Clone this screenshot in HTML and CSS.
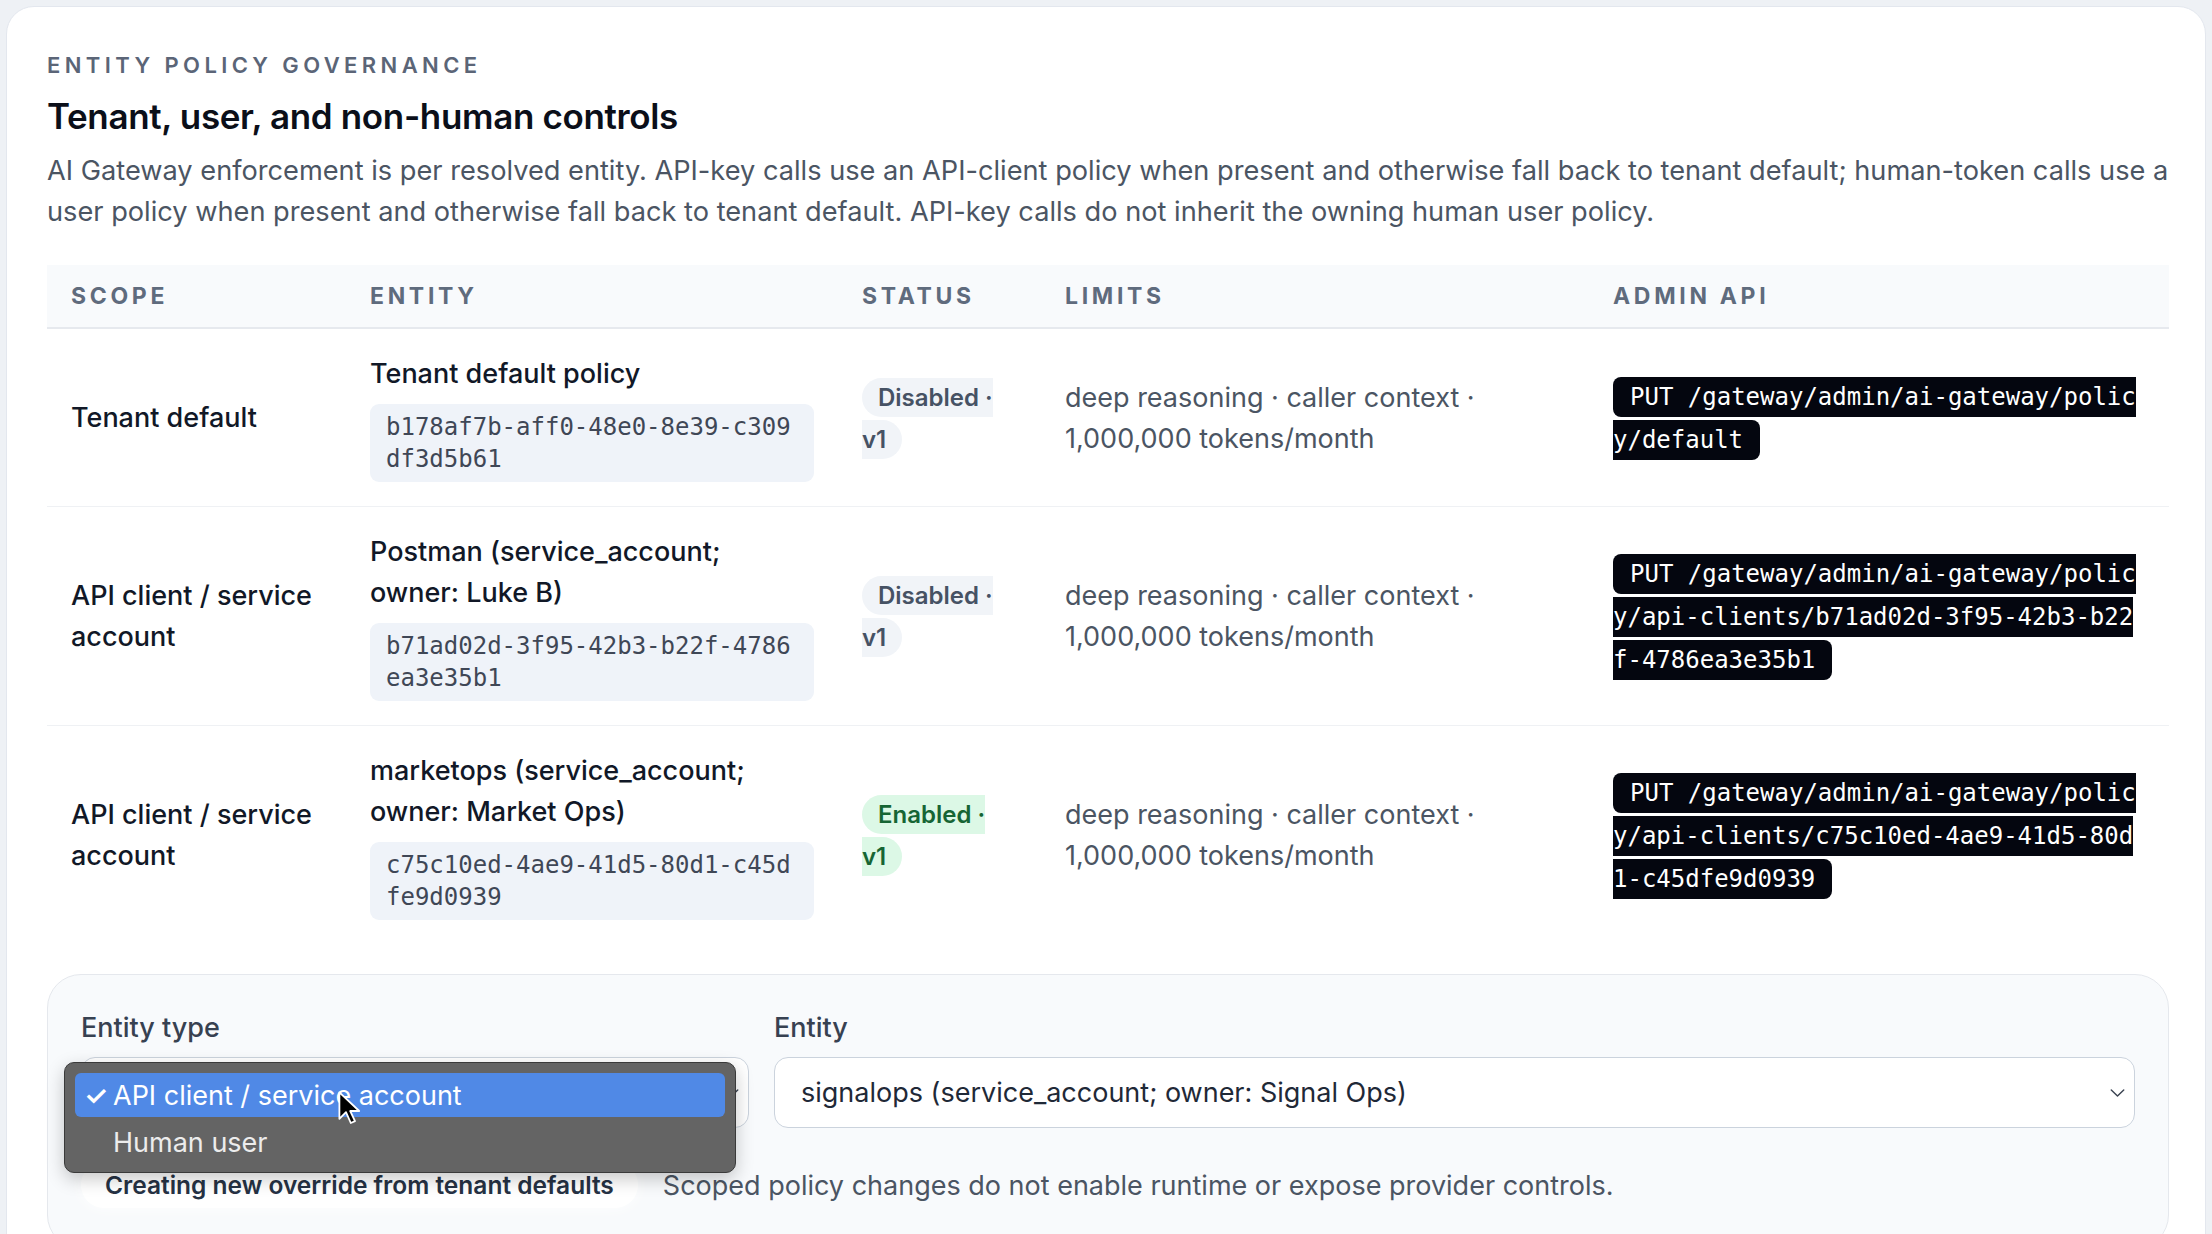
FILE: index.html
```html
<!DOCTYPE html>
<html lang="en">
<head>
<meta charset="utf-8">
<title>Entity policy governance</title>
<link rel="stylesheet" href="styles.css">
</head>
<body>
<section class="card">
  <div class="eyebrow">ENTITY POLICY GOVERNANCE</div>
  <h2 class="title">Tenant, user, and non-human controls</h2>
  <p class="lead">AI Gateway enforcement is per resolved entity. API-key calls use an API-client policy when present and otherwise fall back to tenant default; human-token calls use a user policy when present and otherwise fall back to tenant default. API-key calls do not inherit the owning human user policy.</p>

  <table class="policy-table">
    <colgroup>
      <col class="c-scope"><col class="c-entity"><col class="c-status"><col class="c-limits"><col class="c-api">
    </colgroup>
    <thead>
      <tr><th>Scope</th><th>Entity</th><th>Status</th><th>Limits</th><th>Admin API</th></tr>
    </thead>
    <tbody>
      <tr>
        <td class="scope">Tenant default</td>
        <td><div class="ent-name">Tenant default policy</div><div class="ent-id">b178af7b-aff0-48e0-8e39-c309df3d5b61</div></td>
        <td class="status"><span class="badge">Disabled · v1</span></td>
        <td class="limits">deep reasoning · caller context · 1,000,000 tokens/month</td>
        <td class="api"><code>PUT /gateway/admin/ai-gateway/policy/default</code></td>
      </tr>
      <tr>
        <td class="scope">API client / service account</td>
        <td><div class="ent-name">Postman (service_account; owner: Luke B)</div><div class="ent-id">b71ad02d-3f95-42b3-b22f-4786ea3e35b1</div></td>
        <td class="status"><span class="badge">Disabled · v1</span></td>
        <td class="limits">deep reasoning · caller context · 1,000,000 tokens/month</td>
        <td class="api"><code>PUT /gateway/admin/ai-gateway/policy/api-clients/b71ad02d-3f95-42b3-b22f-4786ea3e35b1</code></td>
      </tr>
      <tr class="last">
        <td class="scope">API client / service account</td>
        <td><div class="ent-name">marketops (service_account; owner: Market Ops)</div><div class="ent-id">c75c10ed-4ae9-41d5-80d1-c45dfe9d0939</div></td>
        <td class="status"><span class="badge badge-on">Enabled · v1</span></td>
        <td class="limits">deep reasoning · caller context · 1,000,000 tokens/month</td>
        <td class="api"><code>PUT /gateway/admin/ai-gateway/policy/api-clients/c75c10ed-4ae9-41d5-80d1-c45dfe9d0939</code></td>
      </tr>
    </tbody>
  </table>

  <div class="panel">
    <div class="fields">
      <div class="field">
        <div class="label">Entity type</div>
        <div class="select-wrap">
          <div class="select">
            <span>API client / service account</span>
            <svg class="chev" viewBox="0 0 16 9" width="15" height="8"><path d="M1 1 L8 8 L15 1" fill="none" stroke="#3b4452" stroke-width="1.6" stroke-linecap="round" stroke-linejoin="round"/></svg>
          </div>
          <div class="popup">
            <div class="opt opt-sel"><span class="check">✓</span>API client / service account</div>
            <div class="opt">Human user</div>
            <svg class="cursor" viewBox="0 0 20 30" width="24" height="36"><path d="M2 2 L2 24 L7.5 18.5 L11.5 27.5 L15 26 L11 17.5 L18.5 17.5 Z" fill="#000" stroke="#fff" stroke-width="1.5" stroke-linejoin="round"/></svg>
          </div>
        </div>
      </div>
      <div class="field">
        <div class="label">Entity</div>
        <div class="select">
          <span>signalops (service_account; owner: Signal Ops)</span>
          <svg class="chev" viewBox="0 0 16 9" width="15" height="8"><path d="M1 1 L8 8 L15 1" fill="none" stroke="#3b4452" stroke-width="1.6" stroke-linecap="round" stroke-linejoin="round"/></svg>
        </div>
      </div>
    </div>
    <div class="note-row">
      <span class="pill">Creating new override from tenant defaults</span>
      <span class="note">Scoped policy changes do not enable runtime or expose provider controls.</span>
    </div>
  </div>
</section>
</body>
</html>
```

FILE: styles.css
```css
* { box-sizing: border-box; }

html, body {
  margin: 0;
  height: 100%;
}

body {
  background: #eef1f5;
  padding: 6px 6px 0 6px;
  font-family: Inter, "Noto Sans", "Liberation Sans", sans-serif;
  color: #111827;
  overflow: hidden;
}

.card {
  background: #ffffff;
  border: 1px solid #e3e7ee;
  border-radius: 28px;
  padding: 43px 36px 60px 40px;
  min-height: 1300px;
}

.eyebrow {
  font-size: 22px;
  font-weight: 600;
  letter-spacing: 0.2em;
  color: #5b6577;
  line-height: 30px;
  margin: 0;
}

.title {
  font-size: 35px;
  font-weight: 600;
  line-height: 44px;
  margin: 14px 0 0 0;
  color: #0b0f19;
  letter-spacing: -0.01em;
}

.lead {
  font-size: 27.2px;
  line-height: 41px;
  color: #4b5563;
  margin: 12px 0 0 0;
}

.policy-table {
  width: 100%;
  border-collapse: collapse;
  table-layout: fixed;
  margin-top: 33px;
}

.c-scope { width: 299px; }
.c-entity { width: 492px; }
.c-status { width: 203px; }
.c-limits { width: 548px; }

.policy-table th {
  background: #f8fafc;
  text-align: left;
  font-size: 23px;
  font-weight: 700;
  letter-spacing: 0.16em;
  text-transform: uppercase;
  color: #5f6b7d;
  height: 63px;
  padding: 0 24px;
  border-bottom: 2px solid #e6e9ee;
}

.policy-table td {
  padding: 24px 24px;
  vertical-align: middle;
  font-size: 27px;
  line-height: 41px;
  border-bottom: 1.5px solid #eff1f4;
}

.policy-table tr.last td {
  border-bottom: none;
}

.scope {
  font-weight: 500;
  color: #111827;
}

.ent-name {
  font-weight: 500;
  color: #111827;
}

.ent-id {
  margin-top: 10px;
  background: #eff3f9;
  border-radius: 9px;
  padding: 7px 16px;
  font-family: "DejaVu Sans Mono", "Liberation Mono", monospace;
  font-size: 24px;
  line-height: 32px;
  color: #3f4756;
  word-break: break-all;
}

.badge {
  background: #f1f4f8;
  color: #465264;
  font-size: 24px;
  font-weight: 600;
  padding: 5px 16px;
  border-radius: 999px;
}

.badge-on {
  background: #dcf8e6;
  color: #166534;
}

.limits {
  color: #4b5563;
}

.api code {
  font-family: "DejaVu Sans Mono", "Liberation Mono", monospace;
  font-size: 24px;
  background: #04060f;
  color: #ffffff;
  padding: 6px 17px;
  border-radius: 8px;
  word-break: break-all;
}

.panel {
  margin-top: 30px;
  background: #f8fafc;
  border: 1.5px solid #e5e8ed;
  border-radius: 34px;
  padding: 36px 33px 40px 33px;
}

.fields {
  display: grid;
  grid-template-columns: 668px 1fr;
  gap: 25px;
}

.label {
  font-size: 27px;
  font-weight: 500;
  line-height: 34px;
  color: #374151;
  margin-bottom: 12px;
}

.select-wrap {
  position: relative;
}

.select {
  height: 71px;
  background: #ffffff;
  border: 1.5px solid #cbd3dd;
  border-radius: 14px;
  padding: 0 9px 0 26px;
  display: flex;
  align-items: center;
  justify-content: space-between;
  font-size: 27px;
  color: #1f2937;
}

.popup {
  position: absolute;
  left: -17px;
  top: 5px;
  width: 672px;
  height: 111px;
  background: #646464;
  border: 1.5px solid #3a3a3a;
  border-radius: 10px;
  box-shadow: 0 6px 18px rgba(0, 0, 0, 0.22);
  padding: 10px 10px;
}

.opt {
  height: 44px;
  display: flex;
  align-items: center;
  padding-left: 38px;
  font-size: 27px;
  color: #ececec;
  border-radius: 6px;
  position: relative;
}

.opt-sel {
  background: #5089e6;
  color: #ffffff;
  margin-bottom: 3px;
}

.check {
  position: absolute;
  left: 9px;
  font-size: 27px;
  font-weight: 600;
}

.cursor {
  position: absolute;
  left: 272px;
  top: 27px;
}

.note-row {
  display: flex;
  align-items: center;
  gap: 25px;
  margin-top: 34px;
}

.pill {
  background: #ffffff;
  border-radius: 999px;
  padding: 8px 24px;
  font-size: 24.5px;
  font-weight: 600;
  color: #263244;
  box-shadow: 0 0 16px rgba(255, 255, 255, 0.9);
}

.note {
  font-size: 27px;
  color: #4b5563;
}
```
